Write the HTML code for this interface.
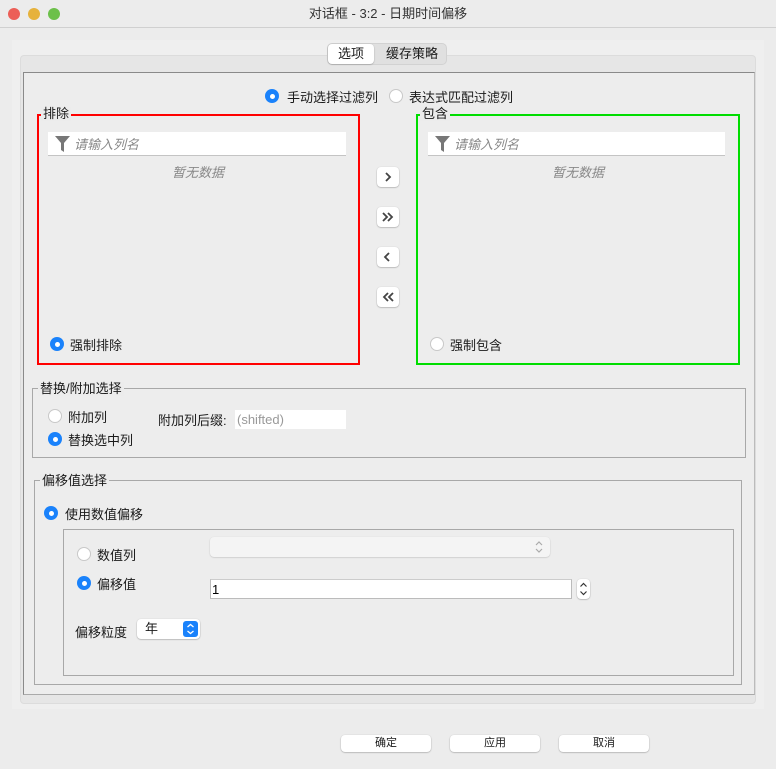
<!DOCTYPE html><html><head><meta charset="utf-8"><style>
*{box-sizing:border-box;margin:0;padding:0}
body{width:776px;height:769px;background:#ececec;font-family:"Liberation Sans","Noto Sans CJK SC",sans-serif;font-size:13px;color:#1a1a1a;position:relative;overflow:hidden}
.a{position:absolute}
.rad{position:absolute;width:14px;height:14px;border-radius:50%;background:#fff;border:1px solid #c8c8c8}
.rad.on{background:#1a82fb;border:none}
.rad.on::after{content:"";position:absolute;left:4.5px;top:4.5px;width:5px;height:5px;border-radius:50%;background:#fff}
.btn{position:absolute;width:22px;height:20px;background:#fff;border-radius:4px;box-shadow:0 0.5px 1.5px rgba(0,0,0,.35)}
.btn svg{position:absolute;left:5px;top:4px}
.grp{position:absolute;border:1px solid #a8a8a8}
.leg{position:absolute;background:#ececec;padding:0 2px;line-height:14px}
.bb{position:absolute;width:90px;height:17px;background:#fff;border-radius:4px;box-shadow:0 0.5px 1.5px rgba(0,0,0,.35);font-size:11px;text-align:center;line-height:17px}
</style></head><body>
<div class="a" style="left:0;top:0;width:776px;height:28px;background:#ececec;border-bottom:1px solid #d0d0d0;text-align:center;line-height:27px;font-size:13px;color:#333">对话框 - 3:2 - 日期时间偏移</div>
<div class="a" style="left:8px;top:8px;width:12px;height:12px;border-radius:50%;background:#ec5f57"></div>
<div class="a" style="left:28px;top:8px;width:12px;height:12px;border-radius:50%;background:#e6b23c"></div>
<div class="a" style="left:48px;top:8px;width:12px;height:12px;border-radius:50%;background:#6cc04a"></div>
<div class="a" style="left:12px;top:40px;width:752px;height:669px;background:#efefef"></div>
<div class="a" style="left:20px;top:55px;width:736px;height:649px;background:#e6e6e6;border-radius:4px;border:1px solid #dcdcdc"></div>
<div class="a" style="left:327px;top:43px;width:120px;height:22px;background:#e0e0e0;border-radius:5px;border:1px solid #d2d2d2"></div>
<div class="a" style="left:328px;top:44px;width:46px;height:20px;background:#fff;border-radius:4px;box-shadow:0 0.5px 1.5px rgba(0,0,0,.3);text-align:center;line-height:20px">选项</div>
<div class="a" style="left:379px;top:44px;width:66px;height:20px;text-align:center;line-height:20px">缓存策略</div>
<div class="a" style="left:23px;top:72px;width:732px;height:623px;background:#ededed;border:1px solid #8a8a8a;border-right-color:#bbb;border-bottom-color:#aaa"></div>
<div class="rad on" style="left:265px;top:89px"></div><div class="a" style="left:287px;top:87px">手动选择过滤列</div>
<div class="rad" style="left:389px;top:89px"></div><div class="a" style="left:409px;top:87px">表达式匹配过滤列</div>
<div class="a" style="left:37px;top:114px;width:323px;height:251px;border:2px solid #f00"></div>
<div class="leg" style="left:41px;top:107px">排除</div>
<div class="a" style="left:48px;top:132px;width:298px;height:24px;background:#fff;border-bottom:1px solid #c4c4c4"></div>
<svg class="a" style="left:55px;top:136px" width="15" height="16" viewBox="0 0 15 16"><path d="M0 0H15L9 7V16L6 14V7Z" fill="#777"/></svg>
<div class="a" style="left:74px;top:134px;color:#888;font-style:italic">请输入列名</div>
<div class="a" style="left:172px;top:162px;color:#888;font-style:italic">暂无数据</div>
<div class="rad on" style="left:50px;top:337px"></div><div class="a" style="left:70px;top:335px">强制排除</div>
<div class="btn" style="left:377px;top:167px"><svg width="12" height="12" viewBox="0 0 12 12"><path d="M4 2L8 6L4 10" fill="none" stroke="#444" stroke-width="1.8"/></svg></div>
<div class="btn" style="left:377px;top:207px"><svg width="12" height="12" viewBox="0 0 12 12"><path d="M1 2L5 6L1 10M6 2L10 6L6 10" fill="none" stroke="#444" stroke-width="1.8"/></svg></div>
<div class="btn" style="left:377px;top:247px"><svg width="12" height="12" viewBox="0 0 12 12"><path d="M7 2L3 6L7 10" fill="none" stroke="#444" stroke-width="1.8"/></svg></div>
<div class="btn" style="left:377px;top:287px"><svg width="12" height="12" viewBox="0 0 12 12"><path d="M6 2L2 6L6 10M11 2L7 6L11 10" fill="none" stroke="#444" stroke-width="1.8"/></svg></div>
<div class="a" style="left:416px;top:114px;width:324px;height:251px;border:2px solid #0d0"></div>
<div class="leg" style="left:420px;top:107px">包含</div>
<div class="a" style="left:428px;top:132px;width:297px;height:24px;background:#fff;border-bottom:1px solid #c4c4c4"></div>
<svg class="a" style="left:435px;top:136px" width="15" height="16" viewBox="0 0 15 16"><path d="M0 0H15L9 7V16L6 14V7Z" fill="#777"/></svg>
<div class="a" style="left:454px;top:134px;color:#888;font-style:italic">请输入列名</div>
<div class="a" style="left:552px;top:162px;color:#888;font-style:italic">暂无数据</div>
<div class="rad" style="left:430px;top:337px"></div><div class="a" style="left:450px;top:335px">强制包含</div>
<div class="grp" style="left:32px;top:388px;width:714px;height:70px"></div>
<div class="leg" style="left:38px;top:382px">替换/附加选择</div>
<div class="rad" style="left:48px;top:409px"></div><div class="a" style="left:68px;top:407px">附加列</div>
<div class="rad on" style="left:48px;top:432px"></div><div class="a" style="left:68px;top:430px">替换选中列</div>
<div class="a" style="left:158px;top:410px">附加列后缀:</div>
<div class="a" style="left:235px;top:410px;width:111px;height:19px;background:#fff;color:#999;padding-left:2px;line-height:19px">(shifted)</div>
<div class="grp" style="left:34px;top:480px;width:708px;height:205px"></div>
<div class="leg" style="left:40px;top:474px">偏移值选择</div>
<div class="rad on" style="left:44px;top:506px"></div><div class="a" style="left:65px;top:504px">使用数值偏移</div>
<div class="grp" style="left:63px;top:529px;width:671px;height:147px"></div>
<div class="rad" style="left:77px;top:547px"></div><div class="a" style="left:97px;top:545px">数值列</div>
<div class="a" style="left:210px;top:537px;width:340px;height:20px;background:#f4f4f4;border-radius:4px;box-shadow:0 0.5px 1.5px rgba(0,0,0,.2)"></div>
<svg class="a" style="left:535px;top:541px" width="8" height="12" viewBox="0 0 8 12"><path d="M1 4L4 1L7 4M1 8L4 11L7 8" fill="none" stroke="#aaa" stroke-width="1.2"/></svg>
<div class="rad on" style="left:77px;top:576px"></div><div class="a" style="left:97px;top:574px">偏移值</div>
<div class="a" style="left:210px;top:579px;width:362px;height:20px;background:#fff;border:1px solid #bbb;border-top-color:#ccc;padding-left:1px;line-height:19px;color:#000">1</div>
<div class="a" style="left:577px;top:579px;width:13px;height:20px;background:#fff;border-radius:4px;box-shadow:0 0.5px 1.5px rgba(0,0,0,.35)"></div>
<svg class="a" style="left:579px;top:582px" width="9" height="14" viewBox="0 0 9 14"><path d="M1.5 4.5L4.5 1.5L7.5 4.5M1.5 9.5L4.5 12.5L7.5 9.5" fill="none" stroke="#333" stroke-width="1.2"/></svg>
<div class="a" style="left:75px;top:622px">偏移粒度</div>
<div class="a" style="left:137px;top:619px;width:63px;height:20px;background:#fff;border-radius:4px;box-shadow:0 0.5px 1.5px rgba(0,0,0,.35);padding-left:8px;line-height:20px">年</div>
<div class="a" style="left:183px;top:621px;width:15px;height:16px;background:#1a82fb;border-radius:3px"></div>
<svg class="a" style="left:186px;top:623px" width="9" height="12" viewBox="0 0 9 12"><path d="M1.5 4L4.5 1.5L7.5 4M1.5 8L4.5 10.5L7.5 8" fill="none" stroke="#fff" stroke-width="1.3"/></svg>
<div class="bb" style="left:341px;top:735px">确定</div>
<div class="bb" style="left:450px;top:735px">应用</div>
<div class="bb" style="left:559px;top:735px">取消</div>
</body></html>
